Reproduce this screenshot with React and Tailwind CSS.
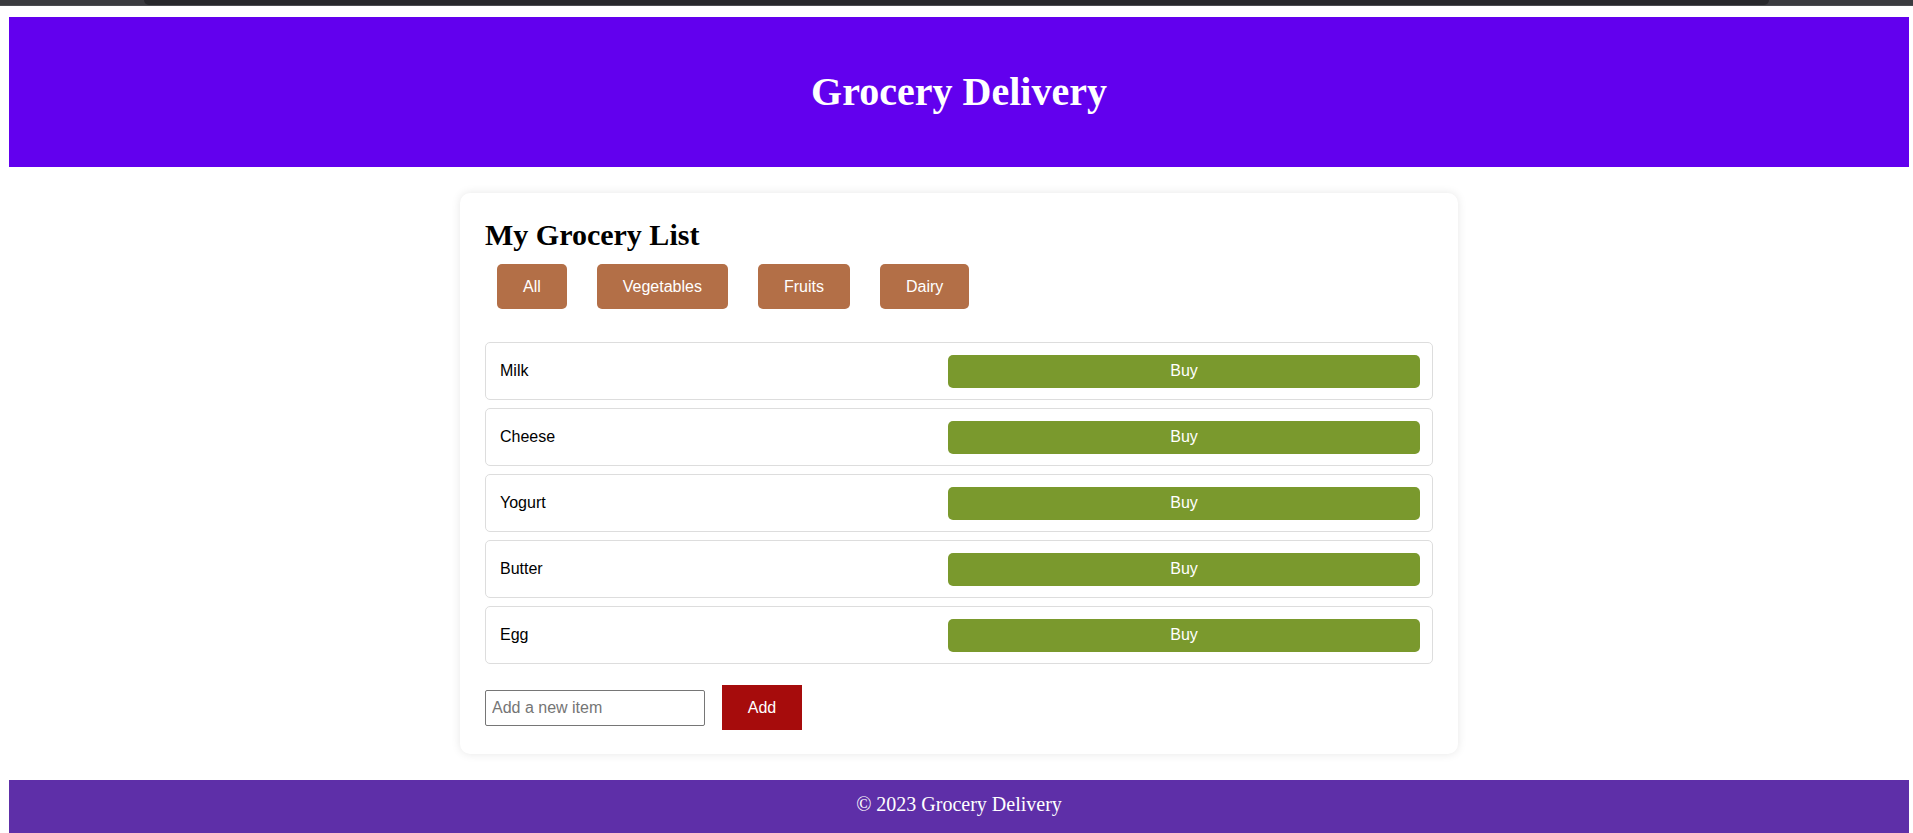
import React from "react";

const categories = ["All", "Vegetables", "Fruits", "Dairy"];
const items = ["Milk", "Cheese", "Yogurt", "Butter", "Egg"];

export default function App() {
  return (
    <div className="bg-white min-h-screen" style={{ fontFamily: '"Liberation Sans", Arial, sans-serif' }}>
      {/* top strip */}
      <div className="h-[6px] bg-[#3a3b3f] flex justify-center border-b border-[#4b4c50]">
        <div className="w-[1625px] h-[5px] bg-[#27282b] rounded-b-[6px]" />
      </div>

      <div className="pt-[11px] pl-[9px] pr-[4px]">
        <header className="h-[150px] bg-[#6200ee] flex items-center justify-center">
          <h1
            className="text-[40px] font-bold text-white leading-none"
            style={{ fontFamily: '"Liberation Serif", "Times New Roman", serif' }}
          >
            Grocery Delivery
          </h1>
        </header>

        <main className="flex justify-center pt-[26px]">
          <div className="w-[998px] bg-white rounded-[10px] shadow-[0_0_10px_rgba(0,0,0,0.1)] px-[25px] pt-[25px] pb-[24px]">
            <h2
              className="text-[30px] font-bold leading-[33px] text-black"
              style={{ fontFamily: '"Liberation Serif", "Times New Roman", serif' }}
            >
              My Grocery List
            </h2>

            <div className="mt-[13px] pl-[12px] flex gap-[30px]">
              {categories.map((c) => (
                <button
                  key={c}
                  className="h-[45px] px-[26px] rounded-[5px] bg-[#b36f47] text-white text-[16px]"
                >
                  {c}
                </button>
              ))}
            </div>

            <div className="mt-[33px] flex flex-col gap-[8px]">
              {items.map((it) => (
                <div
                  key={it}
                  className="h-[58px] border border-[#dddddd] rounded-[5px] flex items-center justify-between pl-[14px] pr-[12px]"
                >
                  <span className="text-[16px] text-black">{it}</span>
                  <button className="w-[472px] h-[33px] rounded-[5px] bg-[#7a992d] text-white text-[16px]">
                    Buy
                  </button>
                </div>
              ))}
            </div>

            <div className="mt-[21px] flex items-center">
              <input
                type="text"
                placeholder="Add a new item"
                className="w-[220px] h-[36px] border border-[#767676] rounded-[2px] px-[6px] text-[16px] text-black placeholder:text-[#757575] outline-none"
              />
              <button className="ml-[17px] w-[80px] h-[45px] bg-[#a60c0c] text-white text-[16px]">
                Add
              </button>
            </div>
          </div>
        </main>

        <footer
          className="mt-[26px] bg-[#5e2fa8] pt-[13px] pb-[17px] text-center text-white text-[20px] leading-[23px]"
          style={{ fontFamily: '"Liberation Serif", "Times New Roman", serif' }}
        >
          © 2023 Grocery Delivery
        </footer>
      </div>
    </div>
  );
}
